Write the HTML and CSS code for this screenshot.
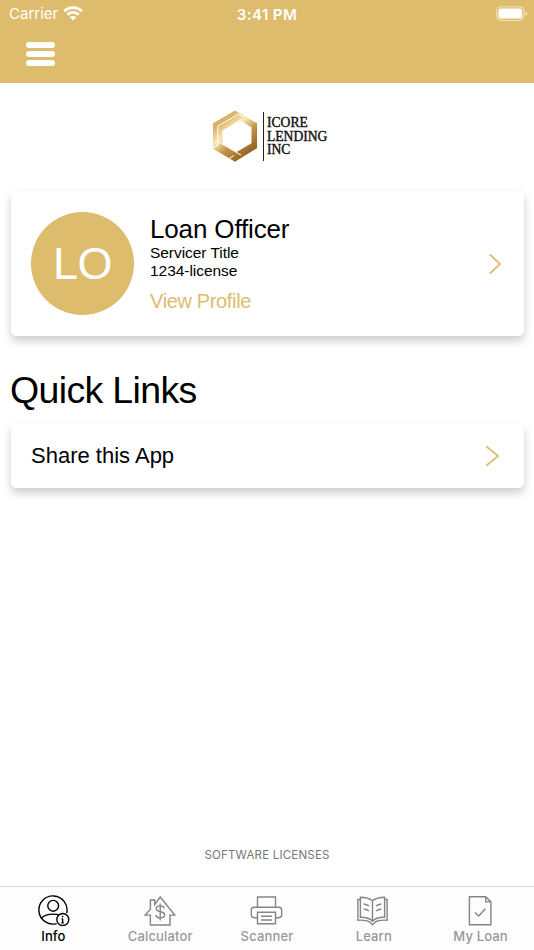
FILE: index.html
```html
<!DOCTYPE html>
<html lang="en">
<head>
  <meta charset="UTF-8">
  <meta name="viewport" content="width=device-width, initial-scale=1.0">
  <title>iCore Lending Inc</title>
  <link rel="stylesheet" href="styles.css">
</head>
<body>

  <!-- Header -->
  <header>
    <div class="status-bar">
      <div class="carrier">
        <span>Carrier</span>
        <svg width="20" height="15" viewBox="0 0 20 15" fill="none" stroke="#fff" stroke-width="2.8">
          <path d="M1.2 5.3a12.6 12.6 0 0 1 17.6 0"/>
          <path d="M4.3 8.7a8.2 8.2 0 0 1 11.4 0"/>
          <path d="M10 14.5l-3.2-3.2a4.6 4.6 0 0 1 6.4 0z" fill="#fff" stroke="none"/>
        </svg>
      </div>
      <div class="time">3:41 PM</div>
      <div class="battery">
        <svg width="32" height="16" viewBox="0 0 32 16">
          <rect x="0.6" y="0.8" width="27.4" height="13.6" rx="4" fill="none" stroke="#f3e6c8" stroke-width="1"/>
          <rect x="2.4" y="2.6" width="23.8" height="10" rx="2.2" fill="#fff"/>
          <path d="M29.6 5.2q1.5 .8 1.5 2.4t-1.5 2.4z" fill="#f3e6c8"/>
        </svg>
      </div>
    </div>
    <div class="menu-toggle">
      <span></span>
      <span></span>
      <span></span>
    </div>
  </header>

  <main>
    <!-- Logo -->
    <div class="logo">
      <svg width="46" height="54" viewBox="0 0 46 54">
        <defs>
          <linearGradient id="gold" x1="0" y1="0" x2="0.7" y2="1">
            <stop offset="0" stop-color="#d3a95a"/>
            <stop offset="0.25" stop-color="#d9b468"/>
            <stop offset="0.45" stop-color="#fbe9b4"/>
            <stop offset="0.65" stop-color="#c2964a"/>
            <stop offset="1" stop-color="#8c5a1c"/>
          </linearGradient>
        </defs>
        <path fill="url(#gold)" fill-rule="evenodd" d="M23 1.5L45 14.3V39.2L23 52.8 1 39.7V14.3z M22.5 14.5L10.5 21.5V34.8L24.5 43 39.5 34.3V18.3L29 12z"/>
        <path fill="none" stroke="#fff" stroke-width="1" d="M5.8 37V17.2L26.5 5.2M1 38.8L6 36M6 32.5L29 46.2M17 49.5L22 46.5M22.5 14.5L29.5 10.4M26.5 5.2L31.5 8.2"/>
      </svg>
      <div class="logo-text">ICORE<br>LENDING<br>INC</div>
    </div>

    <!-- Loan Officer -->
    <section class="card officer">
      <div class="avatar">LO</div>
      <div class="officer-info">
        <h2>Loan Officer</h2>
        <p>Servicer Title</p>
        <p>1234-license</p>
        <a href="#">View Profile</a>
      </div>
      <svg class="chevron" width="14" height="22" viewBox="0 0 14 22"><path d="M1.7 1.3L12 11 1.7 20.7"/></svg>
    </section>

    <!-- Quick Links -->
    <h1>Quick Links</h1>
    <section class="card share">
      <span>Share this App</span>
      <svg class="chevron" width="14" height="22" viewBox="0 0 14 22"><path d="M0.5 1.4L12 11 0.5 20.6"/></svg>
    </section>

    <div class="licenses">SOFTWARE LICENSES</div>
  </main>

  <!-- Tab Bar -->
  <nav>
    <a href="#" class="tab active">
      <svg width="34" height="32" viewBox="-1.2 0 34 32">
        <path d="M29.5 18.2A14.1 14.1 0 1 0 19.5 28.6"/>
        <circle cx="16" cy="10.8" r="5.4"/>
        <path d="M4.5 23q3.6-3.9 11.5-3.9 3.4 0 6 .8"/>
        <circle cx="25.6" cy="24.5" r="6"/>
        <path d="M25.4 23.7v4M24.4 23.8h1M24.2 27.7h2.4M25.4 20.8v1.4"/>
      </svg>
      <span>Info</span>
    </a>
    <a href="#" class="tab">
      <svg width="34" height="32" viewBox="0 0 34 32">
        <path d="M7.4 30V20.1H2.2L7.4 14.2V5h4.3v4.6L17.2 2 31.7 20.1h-4.7V30z"/>
        <path d="M21.3 13.4q-.4-2.5-4.1-2.5-4 0-4 2.7 0 2.4 4.1 3.1 4.3.6 4.3 3.3 0 2.9-4.3 2.9-4.1 0-4.5-3M17.2 8.5V25.5"/>
      </svg>
      <span>Calculator</span>
    </a>
    <a href="#" class="tab">
      <svg width="34" height="32" viewBox="0.5 0 34 32">
        <path d="M8 12V2h18v10"/>
        <path d="M8 22.8H4.8q-3-.3-3-3V15q0-2.8 3-2.8h24.4q3 0 3 2.8v4.8q0 2.7-3 3H26"/>
        <path d="M8 17.2h18V28.8H8zM11.5 21.2h11M11.5 25h11"/>
      </svg>
      <span>Scanner</span>
    </a>
    <a href="#" class="tab">
      <svg width="34" height="32" viewBox="1.5 0 34 32">
        <path d="M17 5.8Q12.5 2.2 4.9 2.2V22.3Q12.8 22 17 26.2 21.2 22 29.1 22.3V2.2Q21.5 2.2 17 5.8zM17 5.8V26"/>
        <path d="M4.9 4.5H2.4V25.2q9-.4 12.3 2.2L17 29.8l2.3-2.4q3.3-2.6 12.3-2.2V4.5h-2.5"/>
        <path d="M8.2 9q3.2.4 5.4 2M8.2 14q3.2.4 5.4 2M25.8 9q-3.2.4-5.4 2M25.8 14q-3.2.4-5.4 2"/>
      </svg>
      <span>Learn</span>
    </a>
    <a href="#" class="tab">
      <svg width="34" height="32" viewBox="0.8 0 34 32">
        <path d="M6.2 1.7h16.3l5.2 5.2V29.7H6.2zM22.5 1.7v5.2h5.2"/>
        <path d="M11.7 17.6l3.8 3.4 6.7-7.2"/>
      </svg>
      <span>My Loan</span>
    </a>
  </nav>

</body>
</html>
```
FILE: styles.css
```css
/* General Reset */
* {
  margin: 0;
  padding: 0;
  box-sizing: border-box;
}

body {
  display: flex;
  flex-direction: column;
  height: 950px;
  overflow: hidden;
  font-family: 'Liberation Sans', Arial, sans-serif;
  background-color: #fff;
  color: #000;
}

a {
  text-decoration: none;
}

/* Header Section */
header {
  height: 83px;
  background-color: #debc6d;
  color: #fff;
}

.status-bar {
  display: grid;
  grid-template-columns: 1fr auto 1fr;
  height: 27px;
  padding: 0 6px 0 9px;
  align-items: center;
  font-family: Inter, sans-serif;
  font-size: 15.5px;
}

.carrier {
  display: flex;
  align-items: center;
  gap: 5px;
  font-size: 15px;
}

.time {
  margin: 1px 3px 0 0;
  font-size: 15px;
  font-weight: 600;
  letter-spacing: 0.4px;
}

.battery {
  display: flex;
  justify-content: flex-end;
}

.menu-toggle {
  display: flex;
  flex-direction: column;
  gap: 3px;
  width: 29px;
  margin: 15px 0 0 26px;
}

.menu-toggle span {
  height: 6px;
  border-radius: 3px;
  background-color: #fff;
}

/* Main Content */
main {
  flex: 1;
  display: flex;
  flex-direction: column;
  padding: 0 10px;
}

.logo {
  display: flex;
  height: 108px;
  padding: 26px 0 0 202px;
}

.logo-text {
  height: 49px;
  margin: 3px 0 0 5px;
  padding: 4px 0 0 3px;
  border-left: 1px solid #222;
  font-family: 'Liberation Serif', serif;
  font-size: 13.6px;
  line-height: 13.5px;
  -webkit-text-stroke: 0.4px #111;
  color: #111;
}

/* Cards */
.card {
  display: flex;
  align-items: center;
  margin: 0 0.5px 0 0.5px;
  border-radius: 5px;
  box-shadow: 0 5px 10px rgba(0, 0, 0, 0.2);
}

.chevron {
  margin-left: auto;
  fill: none;
  stroke: #debc6d;
  stroke-width: 1.8;
}

.officer {
  height: 145px;
  padding: 0 22px 0 20.5px;
}

.avatar {
  width: 103px;
  height: 103px;
  margin-right: 16px;
  border-radius: 50%;
  background-color: #debc6d;
  color: #fff;
  font-size: 45px;
  line-height: 103px;
  text-align: center;
  letter-spacing: -0.5px;
}

.officer-info h2 {
  font-size: 26px;
  font-weight: normal;
  line-height: 30px;
  letter-spacing: -0.15px;
}

.officer-info p {
  font-size: 15.5px;
  line-height: 18px;
  letter-spacing: -0.05px;
}

.officer-info a {
  display: block;
  margin-top: 9px;
  color: #debc6d;
  font-size: 20px;
  line-height: 24px;
  letter-spacing: -0.35px;
}

h1 {
  margin: 33px 0 13px;
  font-size: 37.5px;
  font-weight: normal;
  line-height: 42px;
  letter-spacing: -0.65px;
}

.share {
  height: 64px;
  padding: 0 24px 0 20.5px;
  font-size: 22px;
}

.licenses {
  margin: auto 0 23px;
  color: #777;
  font-family: Inter, sans-serif;
  font-size: 11.5px;
  line-height: 16px;
  letter-spacing: 0.2px;
  text-align: center;
}

/* Tab Bar */
nav {
  display: flex;
  height: 64px;
  border-top: 1px solid #d8d8d8;
  background-color: #fdfdfd;
}

.tab {
  flex: 1;
  display: flex;
  flex-direction: column;
  align-items: center;
  padding-top: 8px;
  color: #98989a;
  font-family: Inter, sans-serif;
  font-size: 13px;
  font-weight: 500;
  line-height: 18px;
  letter-spacing: 0.15px;
}

.tab svg {
  fill: none;
  stroke: #858588;
  stroke-width: 1.4;
}

.tab.active {
  color: #000;
}

.tab.active svg {
  stroke: #000;
}
```
